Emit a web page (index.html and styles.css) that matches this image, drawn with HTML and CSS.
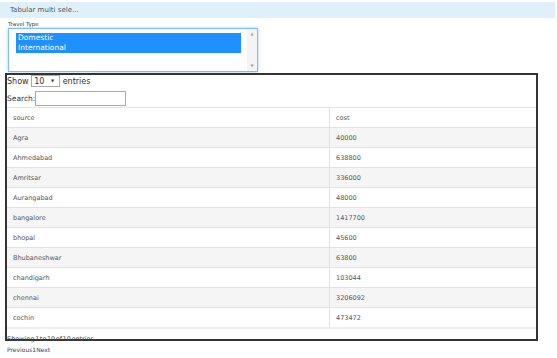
FILE: index.html
```html
<!DOCTYPE html>
<html lang='en'>
<head>
    <meta charset='UTF-8'>
    <meta name='viewport' content='width=device-width, initial-scale=1.0'>
    <title>Tabular multi select</title>
    <link rel="stylesheet" href="styles.css">
</head>
<body>
    <div class='topbar'>Tabular multi sele...</div>
    <div class='field'>
        <div class='field-label'>Travel Type</div>
        <div class='listbox'>
            <div class='options'>
                <div class='option selected'>Domestic</div>
                <div class='option selected'>International</div>
            </div>
            <div class='scrollbar'>
                <span class='arrow'>&#9650;</span>
                <span class='arrow'>&#9660;</span>
            </div>
        </div>
    </div>
    <div class='table-box'>
        <div class='length'>Show <span class='length-select'>10 <span class='caret'>&#9660;</span></span> entries</div>
        <div class='search'>Search:<span class='search-input'></span></div>
        <table class='data'>
            <thead>
                <tr><th class='col-source'>source</th><th>cost</th></tr>
            </thead>
            <tbody>
                <tr><td>Agra</td><td>40000</td></tr>
                <tr><td>Ahmedabad</td><td>638800</td></tr>
                <tr><td>Amritsar</td><td>336000</td></tr>
                <tr><td>Aurangabad</td><td>48000</td></tr>
                <tr><td>bangalore</td><td>1417700</td></tr>
                <tr><td>bhopal</td><td>45600</td></tr>
                <tr><td>Bhubaneshwar</td><td>63800</td></tr>
                <tr><td>chandigarh</td><td>103044</td></tr>
                <tr><td>chennai</td><td>3206092</td></tr>
                <tr><td>cochin</td><td>473472</td></tr>
            </tbody>
        </table>
        <div class='info'>Showing 1 to 10 of 10 entries</div>
        <div class='paging'>Previous1Next</div>
    </div>
</body>
</html>
```

FILE: styles.css
```css
html, body { min-height: 100%; }
body { margin: 0; padding: 0; min-height: 358px; font-family: "DejaVu Sans", Verdana, sans-serif; color: #333; background: #fff; }
.topbar { margin-top: 2px; width: 545px; height: 16px; line-height: 16px; padding-left: 10px; background: #dff0fa; color: #555; font-size: 7px; }
.field { padding: 0 8px; }
.field-label { margin-top: 2px; height: 8px; line-height: 8px; font-size: 5.5px; color: #444; }
.listbox { display: flex; width: 248px; height: 42px; border: 1px solid #80bdee; box-shadow: 0 0 3px rgba(102, 175, 233, 0.6); background: #fff; }
.options { flex: 1; padding: 4px 6px 0 7px; }
.option { height: 10px; line-height: 10px; font-size: 7.5px; padding-left: 2px; color: #333; }
.option.selected { background: #1e90ff; color: #fff; }
.scrollbar { width: 10px; display: flex; flex-direction: column; justify-content: space-between; align-items: center; background: #f4f4f4; padding: 2px 0; }
.arrow { font-size: 4px; color: #a3a3a3; line-height: 6px; }
.table-box { margin: 1px 0 0 5px; width: 529px; height: 264px; border: 2px solid #333; }
.length { height: 13px; line-height: 13px; font-size: 8px; color: #333; }
.length-select { display: inline-block; width: 25px; height: 10px; line-height: 10px; border: 1px solid #aaa; font-size: 8px; padding-left: 2px; vertical-align: middle; margin-top: -2px; }
.caret { font-size: 4px; margin-left: 4px; vertical-align: middle; }
.search { margin-top: 2px; height: 16px; display: flex; align-items: center; font-size: 7.5px; }
.search-input { display: inline-block; width: 89px; height: 13px; border: 1px solid #aaa; }
.data { margin-top: 1px; width: 100%; border-collapse: collapse; font-size: 6.5px; color: #555; border-bottom: 2px solid #eee; }
.data th, .data td { height: 19px; padding: 0 6px; text-align: left; font-weight: normal; border-top: 1px solid #e2e2e2; }
.data th:first-child, .data td:first-child { border-right: 1px solid #e2e2e2; }
.col-source { width: 310px; }
.data tbody tr:nth-child(odd) { background: #f5f5f5; }
.info { margin-top: 5px; height: 10px; line-height: 10px; font-size: 6.5px; color: #444; word-spacing: -1.5px; }
.paging { margin-top: 1px; height: 10px; line-height: 10px; font-size: 6px; color: #444; }
```
